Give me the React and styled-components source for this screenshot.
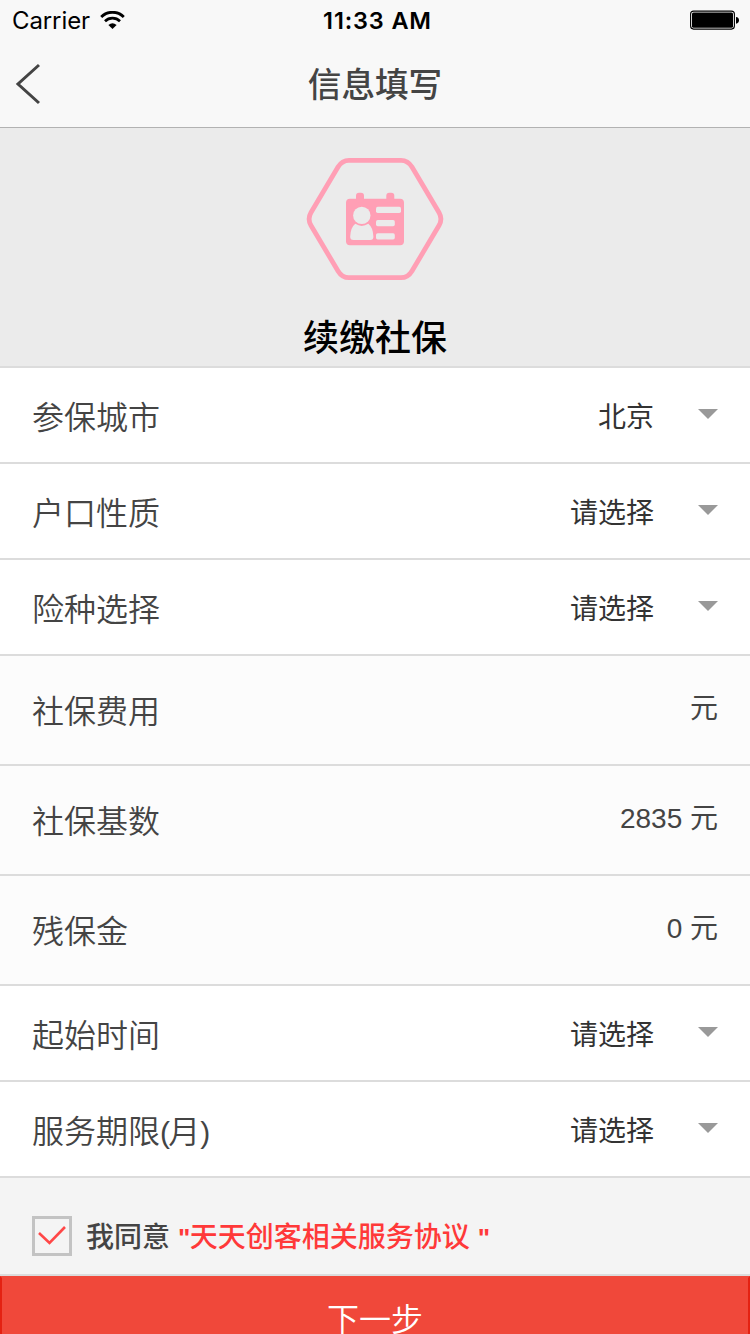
import React from "react";
import styled, { createGlobalStyle } from "styled-components";

const GlobalStyle = createGlobalStyle`
  html, body { margin: 0; padding: 0; }
  body {
    width: 750px;
    height: 1334px;
    overflow: hidden;
    background: #f4f4f4;
    color: #444;
    font-family: "Liberation Sans", "Noto Sans CJK SC", sans-serif;
  }
  * { box-sizing: border-box; }
`;

const Screen = styled.main`
  display: flex;
  flex-direction: column;
  width: 750px;
  height: 1334px;
  overflow: hidden;
  background: #f4f4f4;
`;

const Header = styled.header`
  flex: none;
  height: 128px;
  background: #f8f8f8;
  border-bottom: 1px solid #b2b2b2;
`;

const StatusBar = styled.div`
  display: grid;
  grid-template-columns: 1fr auto 1fr;
  align-items: center;
  height: 40px;
  padding: 0 10px 0 12px;
  color: #000;
  font: 400 24px/38px Inter, sans-serif;
`;

const Carrier = styled.div`
  display: flex;
  align-items: center;
  gap: 10px;
  padding-top: 2px;
  letter-spacing: -0.1px;
  svg { margin-top: -2px; }
`;

const Clock = styled.div`
  padding: 2px 0 0 3px;
  font-weight: 560;
  font-size: 23.5px;
  letter-spacing: 0.85px;
`;

const BatterySlot = styled.div`
  display: flex;
  justify-content: flex-end;
`;

const NavBar = styled.div`
  display: grid;
  grid-template-columns: 60px 1fr 60px;
  align-items: center;
  height: 87px;
`;

const BackIcon = styled.svg`
  margin-left: 14px;
`;

const Title = styled.h1`
  margin: 0 0 2px;
  text-align: center;
  font: 500 33.6px/80px "Noto Sans CJK SC", sans-serif;
  color: #444;
`;

const Hero = styled.section`
  flex: none;
  display: flex;
  flex-direction: column;
  align-items: center;
  height: 240px;
  padding-top: 26px;
  background: #ebebeb;
  border-bottom: 2px solid #dcdcdc;
`;

const HeroName = styled.h2`
  margin: 23px 0 0;
  color: #000;
  font: 500 36px/56px "Noto Sans CJK SC", sans-serif;
`;

const Row = styled.div`
  flex: none;
  display: flex;
  align-items: center;
  height: ${(p) => (p.$readOnly ? 110 : 96)}px;
  padding: 0 32px;
  background: ${(p) => (p.$readOnly ? "#fcfcfc" : "#fff")};
  border-bottom: 2px solid #dcdcdc;
`;

const Label = styled.span`
  flex: 1;
  padding-bottom: ${(p) => (p.$readOnly ? 2 : 1)}px;
  font: 350 32px/48px "Noto Sans CJK SC", sans-serif;
  color: #444;
`;

const Paren = styled.span`
  font-family: "Liberation Sans", sans-serif;
  font-size: 30px;
  line-height: 1;
  letter-spacing: -1.8px;
`;

const Value = styled.span`
  font-size: 28px;
  line-height: 40px;
  color: ${(p) => (p.$readOnly ? "#444" : "#333")};
  padding: ${(p) => (p.$readOnly ? "0 0 2px" : "6px 0 0")};
`;

const Caret = styled.i`
  margin: 0 0 2px 44px;
  border: 10px solid transparent;
  border-top-color: #999;
  border-bottom: 0;
`;

const Agreement = styled.label`
  flex: none;
  display: flex;
  align-items: center;
  height: 98px;
  padding: 20px 32px 0;
  border-bottom: 2px solid #dcdcdc;
  font-size: 28px;
  line-height: 40px;
  font-weight: 500;
`;

const CheckBox = styled.span`
  display: flex;
  align-items: center;
  justify-content: center;
  width: 40px;
  height: 40px;
  margin-right: 14px;
  border: 3px solid #c3c3c3;
  background: #f4f4f4;
`;

const AgreementText = styled.span`
  padding-top: 4px;
`;

const AgreementLink = styled.span`
  margin-left: 8px;
  color: #ff3939;
  white-space: pre;
`;

const Quote = styled.span`
  font-weight: 700;
  font-size: 26px;
  letter-spacing: -0.5px;
`;

const NextButton = styled.button`
  flex: none;
  height: 88px;
  padding: 0 0 7px;
  border: 2px solid #e42112;
  border-top-color: #f0483a;
  background: #f0483a;
  color: #fff;
  font: 350 32px/78px "Noto Sans CJK SC", sans-serif;
`;

function Wifi() {
  return (
    <svg width="25" height="19" viewBox="0 0 25 19" fill="none">
      <path d="M1.2 5.9C7.4 -0.3 17.6 -0.3 23.8 5.9" stroke="#000" strokeWidth="2.8" />
      <path d="M5 10.2C9.2 6.2 15.8 6.2 20 10.2" stroke="#000" strokeWidth="2.7" />
      <path d="M8.4 14Q12.5 10.4 16.6 14L12.5 18Z" fill="#000" />
    </svg>
  );
}

function Battery() {
  return (
    <svg width="50" height="20" viewBox="0 0 50 20">
      <rect x="0.6" y="1.1" width="43.8" height="18" rx="3" fill="none" stroke="#000" strokeWidth="1.1" />
      <rect x="2" y="2.4" width="41" height="15.4" rx="1.5" />
      <path d="M46 7Q49 7.3 49 10.3Q49 13.3 46 13.7Z" />
    </svg>
  );
}

function IdBadge() {
  return (
    <svg width="140" height="130" viewBox="0 0 140 130">
      <path
        d="M44 6.3H96Q103 6.3 107 13L134 58.5Q137.8 65 134 71.5L107 117Q103 123.7 96 123.7H44Q37 123.7 33 117L6 71.5Q2.2 65 6 58.5L33 13Q37 6.3 44 6.3Z"
        fill="none"
        stroke="#ff9fb5"
        strokeWidth="4.8"
      />
      <g fill="#ff9fb5">
        <rect x="41" y="44.7" width="58" height="46.5" rx="4" />
        <rect x="51" y="38.7" width="8" height="10" rx="3" />
        <rect x="81.3" y="38.7" width="8" height="10" rx="3" />
      </g>
      <g fill="#ebebeb">
        <path d="M50.3 69.8Q45.6 73.5 45.2 82.5Q45.1 86 48.5 86H65.2Q68.5 86 68.4 82.5Q68 73.5 63.3 69.8Q56.8 74 50.3 69.8Z" />
        <circle cx="56.8" cy="61.4" r="8.7" />
        <rect x="71" y="52.8" width="25" height="6.2" rx="1.7" />
        <rect x="71" y="66" width="18.8" height="6.2" rx="1.7" />
        <rect x="71" y="79.3" width="18.8" height="6.2" rx="1.7" />
      </g>
    </svg>
  );
}

function SelectRow({ label, value }) {
  return (
    <Row>
      <Label>{label}</Label>
      <Value>{value}</Value>
      <Caret />
    </Row>
  );
}

function AmountRow({ label, value }) {
  return (
    <Row $readOnly>
      <Label $readOnly>{label}</Label>
      <Value $readOnly>{value} 元</Value>
    </Row>
  );
}

export default function App() {
  return (
    <>
      <GlobalStyle />
      <Screen>
        <Header>
          <StatusBar>
            <Carrier>
              Carrier
              <Wifi />
            </Carrier>
            <Clock>11:33 AM</Clock>
            <BatterySlot>
              <Battery />
            </BatterySlot>
          </StatusBar>
          <NavBar>
            <BackIcon width="28" height="42" viewBox="0 0 28 42" fill="none">
              <path d="M25 2L4 21L25 40" stroke="#444" strokeWidth="3" />
            </BackIcon>
            <Title>信息填写</Title>
          </NavBar>
        </Header>
        <Hero>
          <IdBadge />
          <HeroName>续缴社保</HeroName>
        </Hero>
        <SelectRow label="参保城市" value="北京" />
        <SelectRow label="户口性质" value="请选择" />
        <SelectRow label="险种选择" value="请选择" />
        <AmountRow label="社保费用" value="" />
        <AmountRow label="社保基数" value="2835" />
        <AmountRow label="残保金" value="0" />
        <SelectRow label="起始时间" value="请选择" />
        <SelectRow
          label={
            <>
              服务期限<Paren>(</Paren>月<Paren>)</Paren>
            </>
          }
          value="请选择"
        />
        <Agreement>
          <CheckBox>
            <svg width="30" height="22" viewBox="0 0 30 22" fill="none">
              <path d="M2 8L12.5 18L28 2" stroke="#ff4747" strokeWidth="2.6" />
            </svg>
          </CheckBox>
          <AgreementText>
            我同意
            <AgreementLink>
              <Quote>"</Quote>天天创客相关服务协议 <Quote>"</Quote>
            </AgreementLink>
          </AgreementText>
        </Agreement>
        <NextButton type="button">下一步</NextButton>
      </Screen>
    </>
  );
}
